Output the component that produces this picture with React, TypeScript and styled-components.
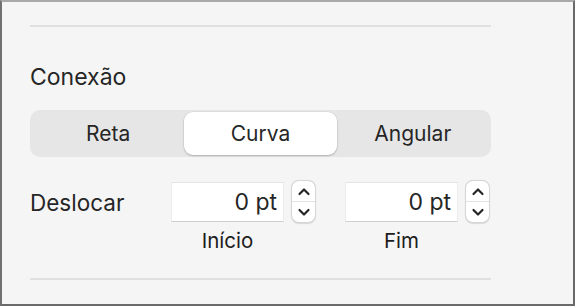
import React from "react";
import styled, { createGlobalStyle } from "styled-components";

const Global = createGlobalStyle`
  html, body { margin: 0; padding: 0; background: #f5f5f5; }
  * { box-sizing: border-box; }
`;

const Panel = styled.div`
  width: 575px;
  height: 306px;
  background: #f5f5f5;
  border-top: 2px solid #a9a9a9;
  border-left: 2px solid #717171;
  border-right: 2px solid #6a6a6a;
  border-bottom: 2px solid #6a6a6a;
  padding-left: 28px;
  font-family: Inter, "Liberation Sans", Arial, sans-serif;
  color: #262626;
`;

const Column = styled.div`
  width: 461px;
  display: flex;
  flex-direction: column;
`;

const Divider = styled.div<{ $top: number }>`
  height: 2px;
  background: #e0e0e0;
  margin-top: ${(p) => p.$top}px;
`;

const Heading = styled.div`
  margin-top: 36px;
  font-size: 23px;
  font-weight: 400;
  line-height: 28px;
  height: 28px;
  color: #262626;
`;

const Segmented = styled.div`
  margin-top: 19px;
  height: 47px;
  border-radius: 10px;
  background: #e6e6e6;
  padding: 2px 2px;
  display: grid;
  grid-template-columns: 1fr 1fr 1fr;
`;

const Segment = styled.div<{ $active?: boolean }>`
  display: flex;
  align-items: center;
  justify-content: center;
  font-size: 21px;
  color: #262626;
  border-radius: 9px;
  background: ${(p) => (p.$active ? "#ffffff" : "transparent")};
  box-shadow: ${(p) =>
    p.$active ? "0 1px 2px rgba(0,0,0,0.22), 0 0 0 0.5px rgba(0,0,0,0.06)" : "none"};
`;

const OffsetGrid = styled.div`
  margin-top: 23px;
  display: grid;
  grid-template-columns: 112px 145px 145px;
  grid-template-rows: 43px 24px;
  column-gap: 29px;
  row-gap: 6px;
`;

const RowLabel = styled.div`
  display: flex;
  align-items: center;
  font-size: 22.5px;
  font-weight: 400;
  color: #262626;
  padding-top: 2px;
`;

const InputGroup = styled.div`
  display: flex;
  align-items: center;
  gap: 7px;
`;

const Field = styled.div`
  width: 113px;
  height: 40px;
  background: #ffffff;
  border-top: 1px solid #e4e4e4;
  border-left: 1px solid #ececec;
  border-right: 1px solid #ececec;
  border-bottom: 1px solid #cfcfcf;
  display: flex;
  align-items: center;
  justify-content: flex-end;
  padding-right: 6px;
  font-size: 23px;
  color: #262626;
`;

const Stepper = styled.div`
  width: 25px;
  height: 43px;
  border-radius: 8px;
  background: #ffffff;
  border: 1px solid #d6d6d6;
  box-shadow: 0 0.5px 1px rgba(0,0,0,0.12);
  display: flex;
  flex-direction: column;
  overflow: hidden;
`;

const StepHalf = styled.div<{ $top?: boolean }>`
  flex: 1;
  display: flex;
  align-items: center;
  justify-content: center;
  border-bottom: ${(p) => (p.$top ? "1px solid #e2e2e2" : "none")};
`;

const Caption = styled.div`
  width: 113px;
  text-align: center;
  font-size: 20.5px;
  line-height: 24px;
  color: #1c1c1c;
`;

const Chevron = ({ up }: { up?: boolean }) => (
  <svg width="14" height="9" viewBox="0 0 14 9">
    <path
      d={up ? "M2.5 7 L7 2.5 L11.5 7" : "M2.5 2 L7 6.5 L11.5 2"}
      fill="none"
      stroke="#262626"
      strokeWidth="2.2"
      strokeLinecap="round"
      strokeLinejoin="round"
    />
  </svg>
);

const NumberInput = ({ value }: { value: string }) => (
  <InputGroup>
    <Field>{value}</Field>
    <Stepper>
      <StepHalf $top>
        <Chevron up />
      </StepHalf>
      <StepHalf>
        <Chevron />
      </StepHalf>
    </Stepper>
  </InputGroup>
);

export default function App() {
  return (
    <>
      <Global />
      <Panel>
        <Column>
          <Divider $top={23} />
          <Heading>Conexão</Heading>
          <Segmented>
            <Segment>Reta</Segment>
            <Segment $active>Curva</Segment>
            <Segment>Angular</Segment>
          </Segmented>
          <OffsetGrid>
            <RowLabel>Deslocar</RowLabel>
            <NumberInput value="0 pt" />
            <NumberInput value="0 pt" />
            <div />
            <Caption>Início</Caption>
            <Caption>Fim</Caption>
          </OffsetGrid>
          <Divider $top={25} />
        </Column>
      </Panel>
    </>
  );
}
